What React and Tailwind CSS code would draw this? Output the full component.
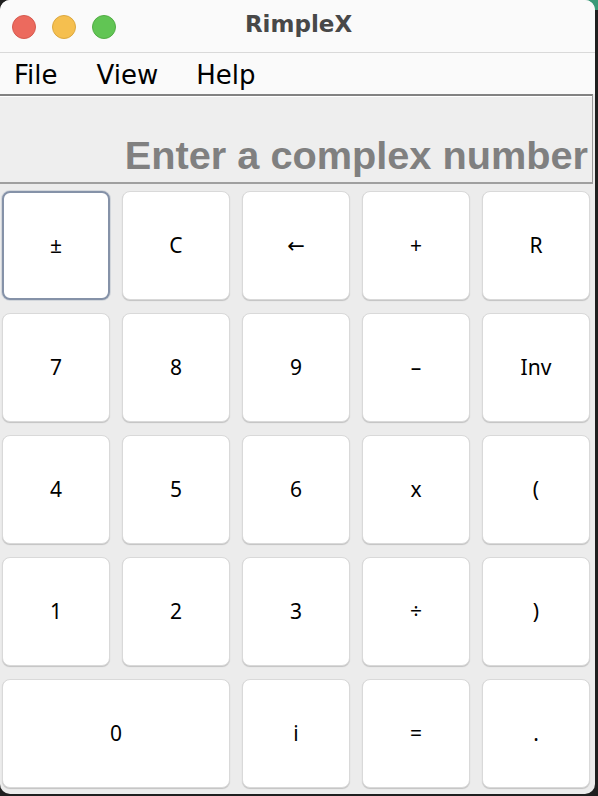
import React from "react";

const rows = [
  ["±", "C", "←", "+", "R"],
  ["7", "8", "9", "–", "Inv"],
  ["4", "5", "6", "x", "("],
  ["1", "2", "3", "÷", ")"],
];

function Key({ label, focused, wide }) {
  return (
    <div
      className={
        "flex items-center justify-center rounded-[8px] bg-white text-[21px] text-black " +
        (wide ? "col-span-2 " : "") +
        (focused
          ? "border-2 border-[#8592a8] shadow-[0_0_0_1px_rgba(133,146,168,0.25)]"
          : "border border-[#d9d9d9] shadow-[0_1px_1px_rgba(0,0,0,0.18)]")
      }
      style={{ fontFamily: '"Noto Sans", "DejaVu Sans", sans-serif' }}
    >
      {label}
    </div>
  );
}

export default function App() {
  return (
    <div className="relative w-[598px] h-[796px] bg-[#1f1f1f] overflow-hidden">
      <div className="absolute right-0 top-0 w-[12px] h-[10px] bg-[#3a9a78]" />
      <div className="relative w-[595px] h-[794px] rounded-[10px] overflow-hidden bg-[#ececec] flex flex-col">
        {/* Title bar */}
        <div className="h-[53px] bg-[#fafafa] border-b border-[#d9d9d9] grid grid-cols-[1fr_auto_1fr] items-center">
          <div className="flex items-center gap-[16px] pl-[12px] pt-[1px]">
            <div className="w-[24px] h-[24px] rounded-full bg-[#ec6a5e] border border-[#d65a4f]" />
            <div className="w-[24px] h-[24px] rounded-full bg-[#f5bf4f] border border-[#dca83f]" />
            <div className="w-[24px] h-[24px] rounded-full bg-[#61c554] border border-[#52ad45]" />
          </div>
          <div
            className="text-[23px] font-bold text-[#484848] pb-[4px] pl-[2px]"
            style={{ fontFamily: '"DejaVu Sans", sans-serif' }}
          >
            RimpleX
          </div>
          <div />
        </div>
        {/* Menu bar */}
        <div
          className="h-[41px] bg-[#fafafa] flex items-center text-[26px] text-black leading-none pt-[2px]"
          style={{ fontFamily: '"DejaVu Sans", sans-serif' }}
        >
          <span className="ml-[14px]">File</span>
          <span className="ml-[39px]">View</span>
          <span className="ml-[38px]">Help</span>
        </div>
        {/* Text field */}
        <div className="h-[90px] w-[593px] border-t-[2px] border-t-[#828282] border-r border-r-[#9a9a9a] border-b-[2px] border-b-[#9f9f9f] bg-[#eeeeee] shadow-[inset_0_1px_0_#ffffff] flex items-end justify-end overflow-hidden">
          <span
            className="text-[39.7px] font-bold text-[#808080] leading-none pr-[4px] pb-[6px] whitespace-nowrap"
            style={{ fontFamily: '"Liberation Sans", Arial, sans-serif' }}
          >
            Enter a complex number
          </span>
        </div>
        {/* Keypad */}
        <div className="pt-[7px] pl-[2px] grid grid-cols-[repeat(5,108px)] auto-rows-[109px] gap-x-[12px] gap-y-[13px]">
          {rows.map((r, i) =>
            r.map((k, j) => <Key key={i + "-" + j} label={k} focused={i === 0 && j === 0} />)
          )}
          <Key label="0" wide />
          <Key label="i" />
          <Key label="=" />
          <Key label="." />
        </div>
      </div>
    </div>
  );
}
